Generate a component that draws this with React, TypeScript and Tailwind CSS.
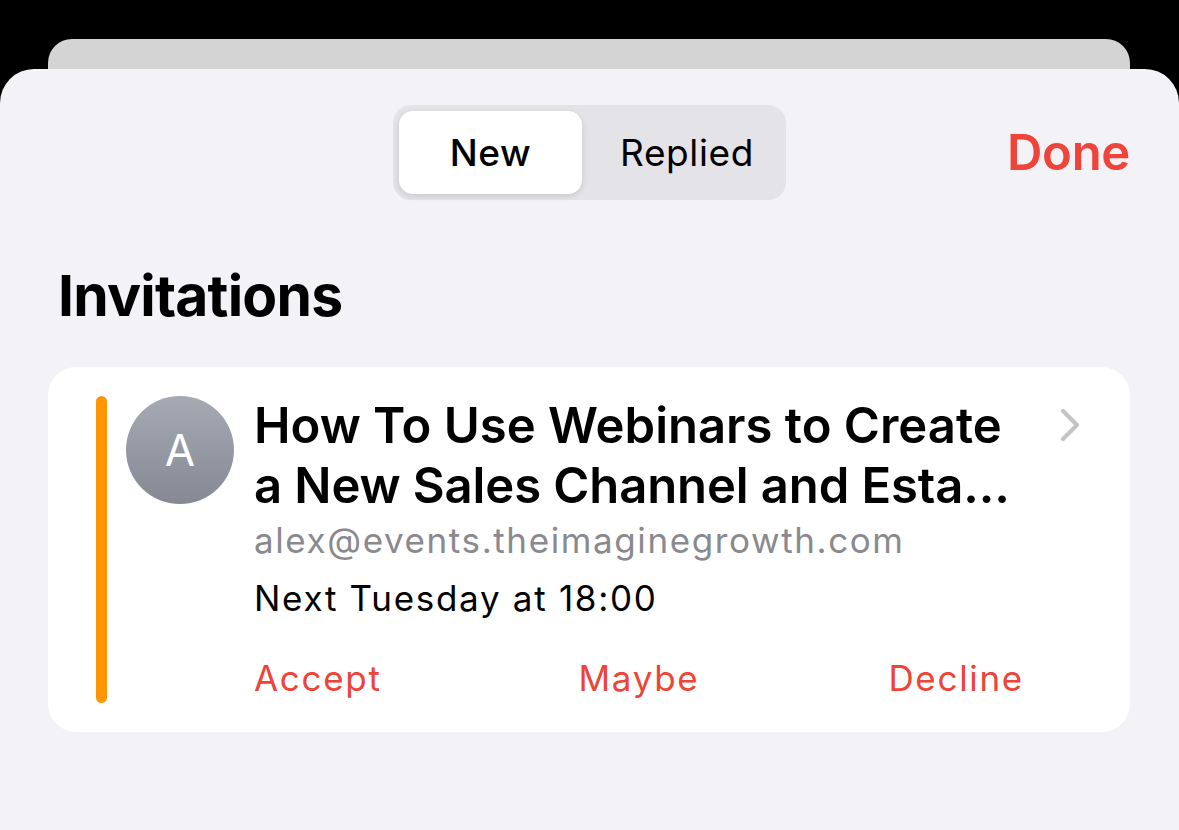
import React from "react";

export default function App() {
  return (
    <div
      className="w-[1179px] h-[830px] bg-black overflow-hidden flex flex-col pt-[39px]"
      style={{ fontFamily: "Inter, 'Noto Sans', 'Liberation Sans', sans-serif" }}
    >
      <div className="ml-[48px] mr-[49px] h-[30px] shrink-0 rounded-t-[24px] bg-[#d4d4d4]" />
      <div className="flex-1 rounded-t-[34px] bg-[#f2f2f7] flex flex-col">
        <div className="mt-[36px] grid grid-cols-[1fr_auto_1fr] items-center">
          <div />
          <div className="flex h-[95px] w-[393px] rounded-[18px] bg-[#e3e3e8] p-[6px]">
            <div className="flex w-[183px] items-center justify-center rounded-[14px] bg-white shadow-[0_2px_6px_rgba(0,0,0,0.12)] text-[37px] font-medium text-black tracking-[0.5px]">
              New
            </div>
            <div className="flex flex-1 items-center justify-center pl-[12px] text-[37px] font-normal text-black tracking-[0.6px]">
              Replied
            </div>
          </div>
          <div className="flex justify-end pr-[49px]">
            <span className="text-[49px] font-semibold text-[#f0443a] tracking-[-0.3px]">Done</span>
          </div>
        </div>

        <h1 className="mt-[67px] ml-[58px] text-[57px] leading-[57px] font-bold text-black tracking-[-0.8px]">
          Invitations
        </h1>

        <div className="mt-[43px] ml-[48px] mr-[49px] rounded-[28px] bg-white flex items-stretch pl-[48px] pr-[48px] py-[29px]">
          <div className="w-[11px] shrink-0 rounded-full bg-[#ff9500]" />
          <div className="ml-[19px] h-[108px] w-[108px] shrink-0 rounded-full bg-gradient-to-b from-[#a6aab4] to-[#858993] flex items-center justify-center">
            <span className="text-[44px] font-normal text-white">A</span>
          </div>
          <div className="ml-[20px] flex-1 flex flex-col pb-[5px] min-w-0">
            <div className="text-[49px] leading-[60px] font-semibold text-black tracking-[0px] whitespace-nowrap">
              How To Use Webinars to Create
            </div>
            <div className="text-[49px] leading-[60px] font-semibold text-black tracking-[-0.1px] whitespace-nowrap">
              a New Sales Channel and Esta...
            </div>
            <div className="mt-[4px] text-[35px] leading-[40px] text-[#8a8a8e] tracking-[1.6px] whitespace-nowrap">
              alex@events.theimaginegrowth.com
            </div>
            <div className="mt-[18px] text-[35px] leading-[40px] text-black tracking-[1.7px] whitespace-nowrap">
              Next Tuesday at 18:00
            </div>
            <div className="mt-[40px] flex justify-between pr-[1px] text-[35px] leading-[40px] text-[#ee4438] tracking-[1.7px]">
              <span>Accept</span>
              <span className="ml-[8px]">Maybe</span>
              <span>Decline</span>
            </div>
          </div>
          <div className="ml-[33px] w-[24px] shrink-0 pt-[12px]">
            <svg width="24" height="34" viewBox="0 0 24 34" fill="none">
              <path d="M5 3 L19 17 L5 31" stroke="#c4c4c7" strokeWidth="4.2" strokeLinecap="round" strokeLinejoin="round" />
            </svg>
          </div>
        </div>
      </div>
    </div>
  );
}
